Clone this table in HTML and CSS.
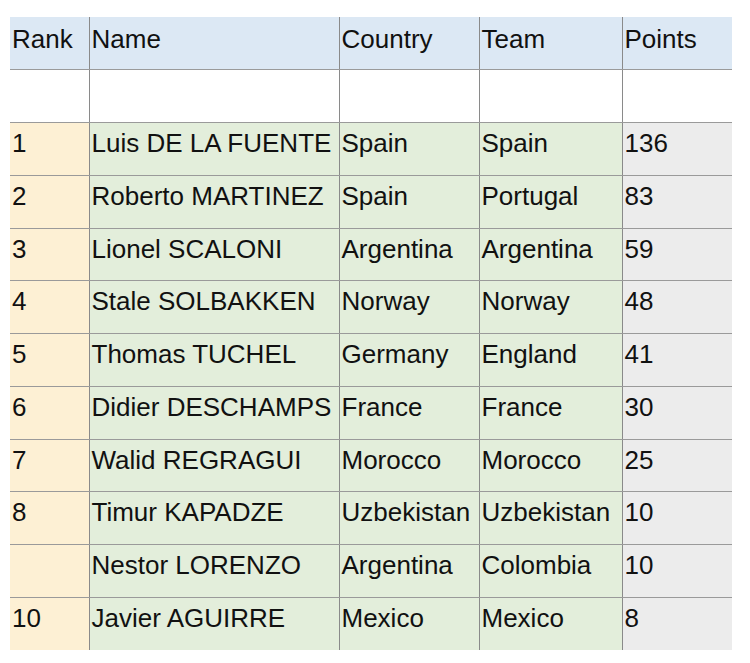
FILE: index.html
```html
<!DOCTYPE html>
<html>
<head>
<meta charset="utf-8">
<link rel="stylesheet" href="styles.css">
</head>
<body>
<table class="sheet">
  <colgroup>
    <col class="c-rank"><col class="c-name"><col class="c-country"><col class="c-team"><col class="c-points">
  </colgroup>
  <thead>
    <tr class="head"><th>Rank</th><th>Name</th><th>Country</th><th>Team</th><th>Points</th></tr>
  </thead>
  <tbody>
    <tr class="blank"><td></td><td></td><td></td><td></td><td></td></tr>
    <tr><td class="rank">1</td><td class="mid">Luis DE LA FUENTE</td><td class="mid">Spain</td><td class="mid">Spain</td><td class="pts">136</td></tr>
    <tr><td class="rank">2</td><td class="mid">Roberto MARTINEZ</td><td class="mid">Spain</td><td class="mid">Portugal</td><td class="pts">83</td></tr>
    <tr><td class="rank">3</td><td class="mid">Lionel SCALONI</td><td class="mid">Argentina</td><td class="mid">Argentina</td><td class="pts">59</td></tr>
    <tr><td class="rank">4</td><td class="mid">Stale SOLBAKKEN</td><td class="mid">Norway</td><td class="mid">Norway</td><td class="pts">48</td></tr>
    <tr><td class="rank">5</td><td class="mid">Thomas TUCHEL</td><td class="mid">Germany</td><td class="mid">England</td><td class="pts">41</td></tr>
    <tr><td class="rank">6</td><td class="mid">Didier DESCHAMPS</td><td class="mid">France</td><td class="mid">France</td><td class="pts">30</td></tr>
    <tr><td class="rank">7</td><td class="mid">Walid REGRAGUI</td><td class="mid">Morocco</td><td class="mid">Morocco</td><td class="pts">25</td></tr>
    <tr><td class="rank">8</td><td class="mid">Timur KAPADZE</td><td class="mid">Uzbekistan</td><td class="mid">Uzbekistan</td><td class="pts">10</td></tr>
    <tr><td class="rank"></td><td class="mid">Nestor LORENZO</td><td class="mid">Argentina</td><td class="mid">Colombia</td><td class="pts">10</td></tr>
    <tr class="last"><td class="rank">10</td><td class="mid">Javier AGUIRRE</td><td class="mid">Mexico</td><td class="mid">Mexico</td><td class="pts">8</td></tr>
  </tbody>
</table>
</body>
</html>
```

FILE: styles.css
```css
html, body {
  margin: 0;
  padding: 0;
  background: #ffffff;
}
body {
  padding: 17px 0 0 10px;
  font-family: "Liberation Sans", Arial, sans-serif;
  font-size: 26px;
  color: #111;
}
.sheet {
  border-collapse: collapse;
  table-layout: fixed;
  width: 722px;
}
.c-rank { width: 79px; }
.c-name { width: 250px; }
.c-country { width: 140px; }
.c-team { width: 143px; }
.c-points { width: 110px; }
.sheet tr {
  height: 52.75px;
}
.sheet th, .sheet td {
  padding: 7px 0 0 2px;
  vertical-align: top;
  text-align: left;
  font-weight: normal;
  white-space: nowrap;
  overflow: hidden;
  line-height: 26px;
  border-left: 1px solid #8a8a8a;
  border-bottom: 1px solid #9a9a9a;
  box-sizing: border-box;
}
.sheet th:first-child, .sheet td:first-child {
  border-left: none;
}
.sheet tr.last td {
  border-bottom: none;
}
.head th {
  background: #dce8f4;
  padding-top: 9px;
}
.blank td {
  background: #ffffff;
}
.rank { background: #fdf0d4; }
.mid { background: #e3eedb; }
.pts { background: #ececec; }
```
